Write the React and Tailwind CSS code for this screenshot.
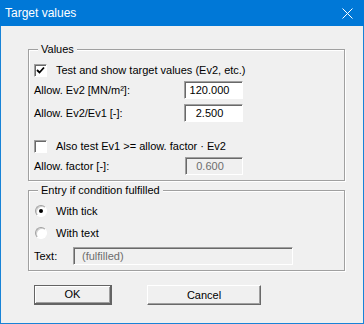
const font = { fontFamily: '"Liberation Sans", Arial, sans-serif' };

const sunken =
  'border-t border-l border-[#a0a0a0] border-r border-b border-r-white border-b-white shadow-[inset_1px_1px_0_#696969]';

function CheckBox({ checked }) {
  return (
    <span className={'flex h-[13px] w-[13px] items-center justify-center bg-white ' + sunken}>
      {checked && (
        <svg width="9" height="9" viewBox="0 0 9 9">
          <path d="M1 4 L3.5 6.5 L8 1.5" stroke="#000" strokeWidth="1.8" fill="none" />
        </svg>
      )}
    </span>
  );
}

function Radio({ checked }) {
  return (
    <span className="flex h-[12px] w-[12px] items-center justify-center rounded-full border border-[#a0a0a0] border-r-white border-b-white bg-white shadow-[inset_1px_1px_0_#d0d0d0]">
      {checked && <span className="h-[4px] w-[4px] rounded-full bg-black" />}
    </span>
  );
}

function Field({ value, disabled, className = '' }) {
  return (
    <div
      className={
        'flex h-[18px] items-center ' +
        sunken +
        ' ' +
        (disabled ? 'bg-[#f0f0f0] text-[#6d6d6d] ' : 'bg-white text-black ') +
        className
      }
    >
      {value}
    </div>
  );
}

function Group({ label, children, className = '' }) {
  return (
    <div
      className={
        'relative border border-[#a0a0a0] shadow-[inset_1px_1px_0_#fff,1px_1px_0_#fff] ' + className
      }
    >
      <span className="absolute -top-[7px] left-[9px] bg-[#f0f0f0] px-[3px] leading-[13px]">{label}</span>
      {children}
    </div>
  );
}

export default function App() {
  return (
    <div
      className="flex h-[324px] w-[364px] flex-col border-x border-b border-[#1883d7] bg-[#f0f0f0] text-[11px] text-black"
      style={font}
    >
      <div className="-mx-px flex h-[26px] items-center justify-between bg-[#0078d7] pl-[5px] pr-[11px] text-[12px] text-white">
        <span>Target values</span>
        <svg width="11" height="11" viewBox="0 0 11 11">
          <path d="M0.5 0.5 L10.5 10.5 M10.5 0.5 L0.5 10.5" stroke="#fff" strokeWidth="1" />
        </svg>
      </div>

      <div className="flex flex-col pl-[27px] pr-[18px] pt-[23px]">
        <Group label="Values" className="px-[5px] pb-[5px] pt-[10px]">
          <div className="flex h-[20px] items-center gap-[9px]">
            <CheckBox checked />
            <span>Test and show target values (Ev2, etc.)</span>
          </div>
          <div className="mt-px flex h-[18px] items-center">
            <span className="w-[150px]">Allow. Ev2 [MN/m²]:</span>
            <Field value="120.000" className="w-[59px] justify-center pr-[8px]" />
          </div>
          <div className="mt-[5px] flex h-[18px] items-center">
            <span className="w-[150px]">Allow. Ev2/Ev1 [-]:</span>
            <Field value="2.500" className="w-[59px] justify-center pr-[8px]" />
          </div>
          <div className="mt-[14px] flex h-[20px] items-center gap-[9px]">
            <CheckBox />
            <span>Also test Ev1 &gt;= allow. factor · Ev2</span>
          </div>
          <div className="mt-px flex h-[18px] items-center">
            <span className="w-[151px]">Allow. factor [-]:</span>
            <Field value="0.600" disabled className="w-[58px] justify-center pr-[8px]" />
          </div>
        </Group>

        <Group label="Entry if condition fulfilled" className="mt-[9px] px-[5px] pb-[5px] pt-[10px]">
          <div className="flex h-[20px] items-center gap-[9px] pl-px">
            <Radio checked />
            <span>With tick</span>
          </div>
          <div className="mt-[2px] flex h-[20px] items-center gap-[9px] pl-px">
            <Radio />
            <span>With text</span>
          </div>
          <div className="mt-[4px] flex h-[18px] items-center">
            <span className="w-[39px]">Text:</span>
            <Field value="(fulfilled)" disabled className="w-[220px] pl-[8px]" />
          </div>
        </Group>

        <div className="mt-[14px] flex gap-[35px] pl-[6px]">
          <button className="flex h-[20px] w-[78px] items-center justify-center border border-[#646464] border-b-2 border-r-2 bg-[#f0f0f0] shadow-[inset_1px_1px_0_#fff,inset_-1px_-1px_0_#a0a0a0]">
            OK
          </button>
          <button className="flex h-[20px] w-[114px] items-center justify-center border border-white border-b-[#696969] border-r-[#696969] bg-[#f0f0f0] shadow-[inset_-1px_-1px_0_#a0a0a0]">
            Cancel
          </button>
        </div>
      </div>
    </div>
  );
}
